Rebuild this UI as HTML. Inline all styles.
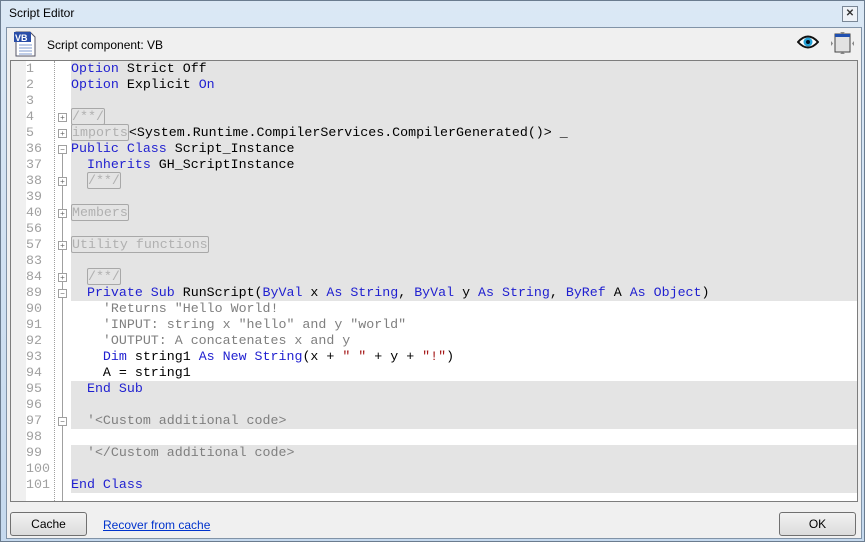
<!DOCTYPE html><html><head><style>
body{margin:0;width:865px;height:542px;overflow:hidden;background:#bcd3ea;font-family:"Liberation Sans",sans-serif;position:relative}
.win{position:absolute;left:0;top:0;width:863px;height:540px;border:1px solid #6b7c8f;background:linear-gradient(#dbe8f5,#c5d9ee)}
.title{position:absolute;left:8px;top:5px;font-size:12px;color:#000}
.x{position:absolute;left:841px;top:5px;width:14px;height:14px;border:1px solid #7a8796;background:#eef2f7;font-size:10px;line-height:14px;text-align:center;font-weight:bold;color:#333}
.client{position:absolute;left:5px;top:26px;width:854px;height:510px;background:#f0f0f0;border:1px solid #8193a7}
.hdr{position:absolute;left:40px;top:10px;font-size:12px}
.ed{position:absolute;left:3px;top:32px;width:846px;height:440px;border:1px solid #7d7d7d;background:#fff;overflow:hidden}
.gut{position:absolute;left:0;top:0;width:15px;height:100%;background:#f0f0f0}
.row{position:absolute;left:15px;height:16px;width:831px;font-family:"Liberation Mono",monospace;font-size:13.3px;line-height:16px;white-space:pre}
.ln{position:absolute;left:0;width:28px;color:#a0a0a0;background:#fff}
.cd{position:absolute;left:45px;right:0;height:16px}
.g{background:#e4e4e4}
.k{color:#1f1fd0}.c{color:#7f7f7f}
.box{border:1px solid #a8a8a8;color:#b0b0b0;border-radius:2px}
.dots{position:absolute;left:43px;top:0;height:100%;border-left:1px dotted #a0a0a0;z-index:2}
.tree{position:absolute;left:51px;border-left:1px solid #a0a0a0;z-index:2}
.fm{position:absolute;left:32px;width:7px;height:7px;border:1px solid #a0a0a0;background:#fff;font-size:8px;line-height:7px;text-align:center;color:#666;font-family:"Liberation Sans",sans-serif;z-index:3}
.btn{position:absolute;top:484px;height:22px;border:1px solid #707070;border-radius:3px;background:linear-gradient(#f2f2f2,#dcdcdc);font-size:12px;text-align:center;line-height:22px}
</style></head><body><div class="win">
<div class="title">Script Editor</div><div class="x">✕</div>
<div class="client">
<svg style="position:absolute;left:6px;top:3px" width="24" height="26"><path d="M3 1h14l5 5v19H3z" fill="#fff" stroke="#556"/><rect x="1" y="1" width="17" height="10" fill="#2b4fa8"/><text x="2" y="10" font-size="9" font-weight="bold" fill="#fff" font-family="Liberation Sans">VB</text><path d="M6 14h13M6 17h13M6 20h13M6 23h13" stroke="#7f9bd0"/></svg>
<div class="hdr">Script component: VB</div>
<svg style="position:absolute;left:790px;top:6px" width="22" height="16"><path d="M1 8Q11-3 21 8Q11 19 1 8z" fill="#fff" stroke="#111" stroke-width="2"/><circle cx="11" cy="8" r="4.5" fill="#25a3d8"/><circle cx="11" cy="8" r="2" fill="#012"/></svg>
<svg style="position:absolute;left:823px;top:3px" width="26" height="24"><rect x="5" y="3" width="15" height="18" fill="#e2e2e2" stroke="#444"/><rect x="5" y="3" width="15" height="3" fill="#2050b0"/><path d="M10 1h5l-2.5 2zM10 23h5l-2.5-2zM1 10v5l2-2.5zM24 10v5l-2-2.5z" fill="#888"/></svg>
<div class="ed"><div class="gut"></div>
<div id="rows"></div>
</div>
<div class="btn" style="left:3px;width:75px">Cache</div>
<div style="position:absolute;left:96px;top:490px;font-size:12px;color:#0033cc;text-decoration:underline">Recover from cache</div>
<div class="btn" style="left:772px;width:75px">OK</div>
</div></div>
<script>
const R=[
["1",'<span class="k">Option</span> Strict Off',1],
["2",'<span class="k">Option</span> Explicit <span class="k">On</span>',1],
["3",'',1],
["4",'<span class="box">/**/</span>',1,'+'],
["5",'<span class="box">imports</span>&lt;System.Runtime.CompilerServices.CompilerGenerated()&gt; _',1,'+'],
["36",'<span class="k">Public Class</span> Script_Instance',1,'-'],
["37",'  <span class="k">Inherits</span> GH_ScriptInstance',1],
["38",'  <span class="box">/**/</span>',1,'+'],
["39",'',1],
["40",'<span class="box">Members</span>',1,'+'],
["56",'',1],
["57",'<span class="box">Utility functions</span>',1,'+'],
["83",'',1],
["84",'  <span class="box">/**/</span>',1,'+'],
["89",'  <span class="k">Private Sub</span> RunScript(<span class="k">ByVal</span> x <span class="k">As String</span>, <span class="k">ByVal</span> y <span class="k">As String</span>, <span class="k">ByRef</span> A <span class="k">As Object</span>)',1,'-'],
["90",'    <span class="c">\'Returns "Hello World!</span>',0],
["91",'    <span class="c">\'INPUT: string x "hello" and y "world"</span>',0],
["92",'    <span class="c">\'OUTPUT: A concatenates x and y</span>',0],
["93",'    <span class="k">Dim</span> string1 <span class="k">As New String</span>(x + <span style="color:#a31515">" "</span> + y + <span style="color:#a31515">"!"</span>)',0],
["94",'    A = string1',0],
["95",'  <span class="k">End Sub</span>',1],
["96",'',1],
["97",'  <span class="c">\'&lt;Custom additional code&gt;</span>',1,'-'],
["98",'',0],
["99",'  <span class="c">\'&lt;/Custom additional code&gt;</span>',1],
["100",'',1],
["101",'<span class="k">End Class</span>',1]];
let h='';
R.forEach((r,i)=>{const t=i*16;
h+=`<div class="row" style="top:${t}px"><div class="ln">${r[0]}</div><div class="cd ${r[2]?'g':''}">${r[1]}</div>${r[3]?`<div class="fm" style="top:4px">${r[3]=='+'?'+':'−'}</div>`:''}</div>`;});
h+='<div class="dots"></div><div class="tree" style="top:88px;height:394px"></div>';
document.getElementById('rows').innerHTML=h;
</script></body></html>
